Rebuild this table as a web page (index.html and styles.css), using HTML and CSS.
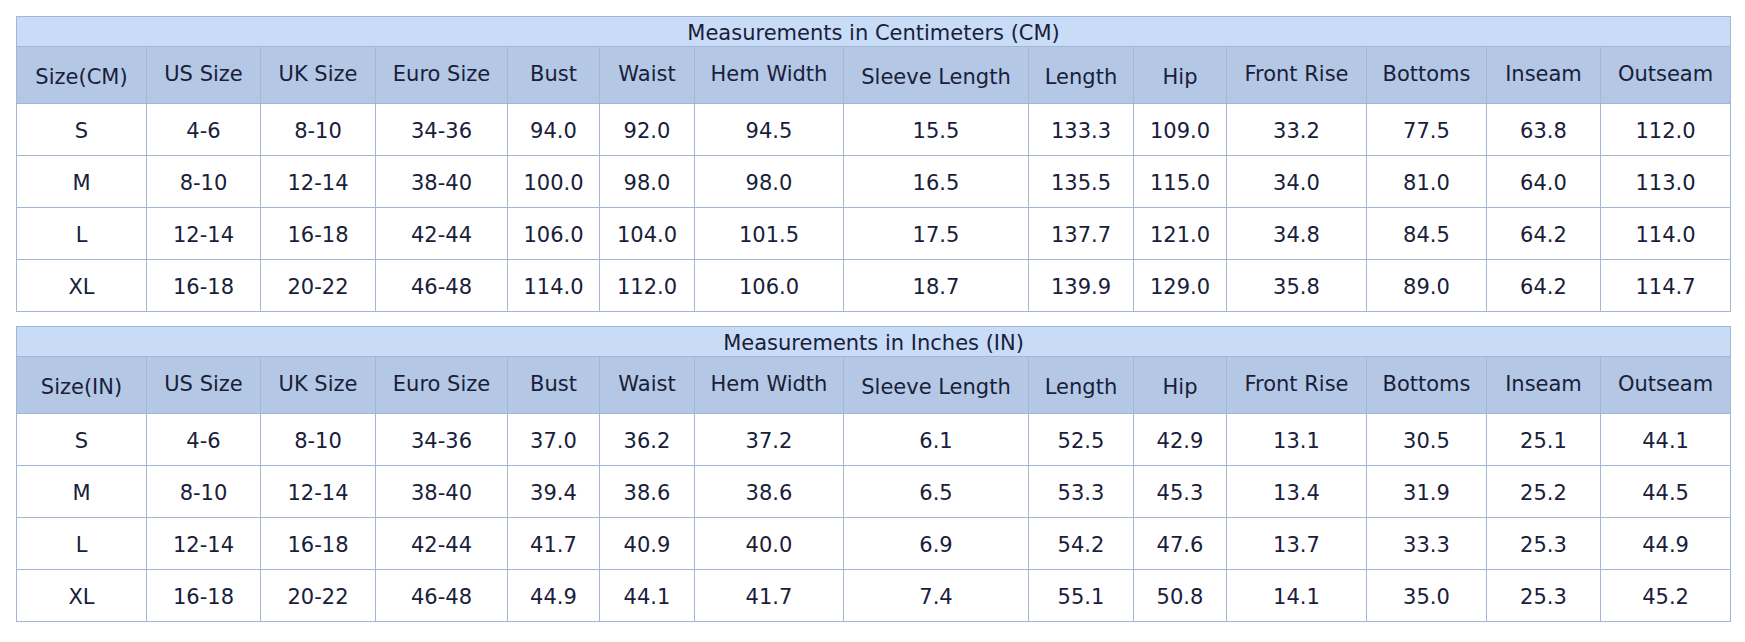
FILE: index.html
```html
<!DOCTYPE html>
<html lang="en">
<head>
<meta charset="utf-8">
<title>Size Chart</title>
<link rel="stylesheet" href="styles.css">
</head>
<body>
<div class="page">
  <table class="chart">
    <colgroup>
      <col class="c1"><col class="c2"><col class="c3"><col class="c4"><col class="c5"><col class="c6"><col class="c7"><col class="c8"><col class="c9"><col class="c10"><col class="c11"><col class="c12"><col class="c13"><col class="c14">
    </colgroup>
    <thead>
      <tr class="title-row"><th colspan="14">Measurements in Centimeters (CM)</th></tr>
      <tr class="head-row">
        <th class="low">Size(CM)</th><th>US Size</th><th>UK Size</th><th>Euro Size</th><th>Bust</th><th>Waist</th><th>Hem Width</th><th class="low">Sleeve Length</th><th class="low">Length</th><th class="low">Hip</th><th>Front Rise</th><th>Bottoms</th><th>Inseam</th><th>Outseam</th>
      </tr>
    </thead>
    <tbody>
      <tr><td>S</td><td>4-6</td><td>8-10</td><td>34-36</td><td>94.0</td><td>92.0</td><td>94.5</td><td>15.5</td><td>133.3</td><td>109.0</td><td>33.2</td><td>77.5</td><td>63.8</td><td>112.0</td></tr>
      <tr><td>M</td><td>8-10</td><td>12-14</td><td>38-40</td><td>100.0</td><td>98.0</td><td>98.0</td><td>16.5</td><td>135.5</td><td>115.0</td><td>34.0</td><td>81.0</td><td>64.0</td><td>113.0</td></tr>
      <tr><td>L</td><td>12-14</td><td>16-18</td><td>42-44</td><td>106.0</td><td>104.0</td><td>101.5</td><td>17.5</td><td>137.7</td><td>121.0</td><td>34.8</td><td>84.5</td><td>64.2</td><td>114.0</td></tr>
      <tr><td>XL</td><td>16-18</td><td>20-22</td><td>46-48</td><td>114.0</td><td>112.0</td><td>106.0</td><td>18.7</td><td>139.9</td><td>129.0</td><td>35.8</td><td>89.0</td><td>64.2</td><td>114.7</td></tr>
    </tbody>
  </table>

  <table class="chart">
    <colgroup>
      <col class="c1"><col class="c2"><col class="c3"><col class="c4"><col class="c5"><col class="c6"><col class="c7"><col class="c8"><col class="c9"><col class="c10"><col class="c11"><col class="c12"><col class="c13"><col class="c14">
    </colgroup>
    <thead>
      <tr class="title-row"><th colspan="14">Measurements in Inches (IN)</th></tr>
      <tr class="head-row">
        <th class="low">Size(IN)</th><th>US Size</th><th>UK Size</th><th>Euro Size</th><th>Bust</th><th>Waist</th><th>Hem Width</th><th class="low">Sleeve Length</th><th class="low">Length</th><th class="low">Hip</th><th>Front Rise</th><th>Bottoms</th><th>Inseam</th><th>Outseam</th>
      </tr>
    </thead>
    <tbody>
      <tr><td>S</td><td>4-6</td><td>8-10</td><td>34-36</td><td>37.0</td><td>36.2</td><td>37.2</td><td>6.1</td><td>52.5</td><td>42.9</td><td>13.1</td><td>30.5</td><td>25.1</td><td>44.1</td></tr>
      <tr><td>M</td><td>8-10</td><td>12-14</td><td>38-40</td><td>39.4</td><td>38.6</td><td>38.6</td><td>6.5</td><td>53.3</td><td>45.3</td><td>13.4</td><td>31.9</td><td>25.2</td><td>44.5</td></tr>
      <tr><td>L</td><td>12-14</td><td>16-18</td><td>42-44</td><td>41.7</td><td>40.9</td><td>40.0</td><td>6.9</td><td>54.2</td><td>47.6</td><td>13.7</td><td>33.3</td><td>25.3</td><td>44.9</td></tr>
      <tr><td>XL</td><td>16-18</td><td>20-22</td><td>46-48</td><td>44.9</td><td>44.1</td><td>41.7</td><td>7.4</td><td>55.1</td><td>50.8</td><td>14.1</td><td>35.0</td><td>25.3</td><td>45.2</td></tr>
    </tbody>
  </table>
</div>
</body>
</html>
```

FILE: styles.css
```css
html, body {
  margin: 0;
  padding: 0;
  background: #ffffff;
}

.page {
  padding: 16px 15px 0 16px;
  display: flex;
  flex-direction: column;
  gap: 14px;
}

.chart {
  width: 1714px;
  table-layout: fixed;
  border-collapse: collapse;
  font-family: "DejaVu Sans", Verdana, sans-serif;
  font-size: 21px;
  color: #18203a;
}

.chart th,
.chart td {
  border: 1px solid #a3b6d4;
  padding: 0;
  text-align: center;
  vertical-align: middle;
  font-weight: normal;
}

.c1 { width: 130px; }
.c2 { width: 114px; }
.c3 { width: 115px; }
.c4 { width: 132px; }
.c5 { width: 92px; }
.c6 { width: 95px; }
.c7 { width: 149px; }
.c8 { width: 185px; }
.c9 { width: 105px; }
.c10 { width: 93px; }
.c11 { width: 140px; }
.c12 { width: 120px; }
.c13 { width: 114px; }
.c14 { width: 130px; }

.title-row th {
  background: #c9dcf7;
  height: 30px;
  line-height: 24px;
  padding-top: 2px;
  box-sizing: border-box;
}

.head-row th {
  background: #b4c8e5;
  height: 57px;
  box-sizing: border-box;
  padding-bottom: 3px;
}

.head-row th.low {
  padding-top: 4px;
  padding-bottom: 0;
}

.chart tbody td {
  height: 52px;
  box-sizing: border-box;
  background: #ffffff;
  padding-top: 2px;
}
```
